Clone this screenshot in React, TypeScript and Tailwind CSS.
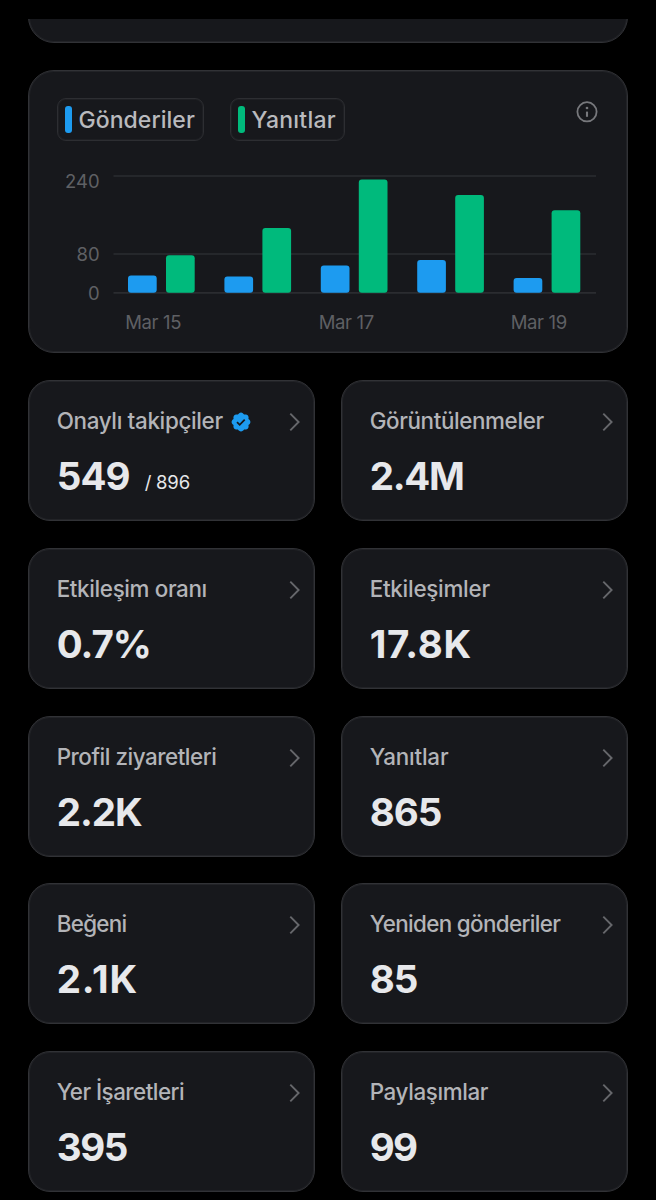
import React from 'react';

type Metric = {
  label: string;
  labelClass: string;
  value: string;
  valueClass: string;
  total?: string;
  verified?: boolean;
};

const metrics: Metric[] = [
  { label: 'Onaylı takipçiler', labelClass: 'tracking-[-0.33px]', value: '549', valueClass: 'tracking-[-0.9px]', total: '/ 896', verified: true },
  { label: 'Görüntülenmeler', labelClass: 'tracking-[-0.38px]', value: '2.4M', valueClass: 'tracking-[-1.3px]' },
  { label: 'Etkileşim oranı', labelClass: 'tracking-[-0.36px]', value: '0.7%', valueClass: 'tracking-[-1px]' },
  { label: 'Etkileşimler', labelClass: 'tracking-[-0.25px]', value: '17.8K', valueClass: 'tracking-[0.7px]' },
  { label: 'Profil ziyaretleri', labelClass: 'tracking-[-0.46px]', value: '2.2K', valueClass: 'tracking-[-1px]' },
  { label: 'Yanıtlar', labelClass: 'tracking-[-0.2px]', value: '865', valueClass: 'tracking-[-1px]' },
  { label: 'Beğeni', labelClass: 'tracking-[-0.7px]', value: '2.1K', valueClass: 'tracking-[0.9px]' },
  { label: 'Yeniden gönderiler', labelClass: 'tracking-[-0.65px]', value: '85', valueClass: 'tracking-[-1px]' },
  { label: 'Yer İşaretleri', labelClass: 'tracking-[-0.52px]', value: '395', valueClass: 'tracking-[-1.4px]' },
  { label: 'Paylaşımlar', labelClass: 'tracking-[-0.38px]', value: '99', valueClass: 'tracking-[-1.7px]' },
];

const days = [
  { posts: 17.4, replies: 37.5 },
  { posts: 16.4, replies: 64.7 },
  { posts: 27.2, replies: 113.4 },
  { posts: 32.7, replies: 97.7 },
  { posts: 14.9, replies: 82.5 },
];

function Chevron() {
  return (
    <svg className="h-[20px] w-[12px] shrink-0" viewBox="0 0 12 20" fill="none" stroke="#66676b" strokeWidth="1.9">
      <path d="M1.3 1.7 9.6 10 1.3 18.3" />
    </svg>
  );
}

function VerifiedBadge() {
  return (
    <svg className="ml-[7px] size-[22px] shrink-0" viewBox="0 0 22 22">
      <path
        fill="#1d9bf0"
        d="M20.396 11c-.018-.646-.215-1.275-.57-1.816-.354-.54-.852-.972-1.438-1.246.223-.607.27-1.264.14-1.897-.131-.634-.437-1.218-.882-1.687-.47-.445-1.053-.75-1.687-.882-.633-.13-1.29-.083-1.897.14-.273-.587-.704-1.086-1.245-1.44S11.647 1.62 11 1.604c-.646.017-1.273.213-1.813.568s-.969.854-1.24 1.44c-.608-.223-1.267-.272-1.902-.14-.635.13-1.22.436-1.69.882-.445.47-.749 1.055-.878 1.688-.13.633-.08 1.29.144 1.896-.587.274-1.087.705-1.443 1.245-.356.54-.555 1.17-.574 1.817.02.647.218 1.276.574 1.817.356.54.856.972 1.443 1.245-.224.606-.274 1.263-.144 1.896.13.634.433 1.218.877 1.688.47.443 1.054.747 1.687.878.633.132 1.29.084 1.897-.136.274.586.705 1.084 1.246 1.439.54.354 1.17.551 1.816.569.647-.016 1.276-.213 1.817-.567s.972-.854 1.245-1.44c.604.239 1.266.296 1.903.164.636-.132 1.22-.447 1.68-.907.46-.46.776-1.044.908-1.681s.075-1.299-.165-1.903c.586-.274 1.084-.705 1.439-1.246.354-.54.551-1.17.569-1.816z"
      />
      <path d="m7 11.2 2.7 2.6 5-5.1" fill="none" stroke="#17181c" strokeWidth="1.8" />
    </svg>
  );
}

function MetricCard({ metric }: { metric: Metric }) {
  return (
    <div className="flex h-[141px] flex-col rounded-[22px] border border-[#313236] bg-[#17181c] pr-[13.5px] pl-[27.7px] shadow-[inset_0_0_0_1px_#222327]">
      <div className="mt-[27px] flex h-[28px] items-center">
        <span className={`-mt-[2px] text-[22.4px] leading-[28px] font-[450] whitespace-nowrap text-[#b3b4b8] ${metric.labelClass}`}>
          {metric.label}
        </span>
        {metric.verified && <VerifiedBadge />}
        <span className="ml-auto flex">
          <Chevron />
        </span>
      </div>
      <div className="mt-[16px] flex items-end text-[#e7e8eb]">
        <span className={`text-[38.5px] leading-[48px] font-bold ${metric.valueClass}`}>{metric.value}</span>
        {metric.total && <span className="mb-[4px] ml-[15px] text-[18.5px] leading-[28px] tracking-[-0.2px]">{metric.total}</span>}
      </div>
    </div>
  );
}

function Legend({ label, swatch, spacing }: { label: string; swatch: string; spacing: string }) {
  return (
    <div className={`flex h-[43px] items-center rounded-[9px] border border-[#2d2e32] pl-[7px] shadow-[inset_0_0_0_1px_#1e1f23] ${spacing}`}>
      <span className={`h-[27px] w-[7px] rounded-[3px] ${swatch}`} />
      <span className="ml-[6.5px] text-[23px] leading-[28px] font-[450] whitespace-nowrap text-[#b9babe]">{label}</span>
    </div>
  );
}

function Chart() {
  return (
    <svg className="h-[180px] w-[540px]" viewBox="57 160 540 180" fill="#5f6064" fontSize="18.5">
      {[176, 254, 292.8].map((y) => (
        <path key={y} d={`M113.5 ${y}H596`} stroke="#2b2c30" strokeWidth="1.7" />
      ))}
      <g textAnchor="end">
        <text x="99.7" y="187.8">240</text>
        <text x="99.7" y="260.8">80</text>
        <text x="99.7" y="299.8">0</text>
      </g>
      {days.map((day, i) => (
        <g key={i}>
          <rect x={128 + i * 96.4} y={292.8 - day.posts} width="28.7" height={day.posts} rx="3" fill="#1d9bf0" />
          <rect x={166 + i * 96.4} y={292.8 - day.replies} width="28.7" height={day.replies} rx="3" fill="#00ba7c" />
        </g>
      ))}
      <g letterSpacing="-0.35">
        <text x="125.2" y="329.4">Mar 15</text>
        <text x="318.7" y="329.4">Mar 17</text>
        <text x="510.7" y="329.4">Mar 19</text>
      </g>
    </svg>
  );
}

export default function App() {
  return (
    <main className="h-[1200px] w-[656px] overflow-hidden bg-black pt-[19px] font-['Inter','Noto_Sans',sans-serif]">
      <div className="mx-[28px] flex h-[24px] items-end overflow-hidden">
        <div className="h-[80px] w-full shrink-0 rounded-[26px] border border-[#313236] bg-[#17181c] shadow-[inset_0_0_0_1px_#222327]" />
      </div>
      <section className="mx-[28px] mt-[27px] h-[283px] rounded-[26px] border border-[#313236] bg-[#17181c] pt-[27px] pl-[28px] shadow-[inset_0_0_0_1px_#222327]">
        <div className="flex h-[62px] items-start">
          <Legend label="Gönderiler" swatch="bg-[#1d9bf0]" spacing="w-[147px] tracking-[0.05px]" />
          <Legend label="Yanıtlar" swatch="bg-[#00ba7c]" spacing="ml-[26px] w-[115px] tracking-[0.25px]" />
          <svg className="mt-[2px] mr-[28.5px] ml-auto size-[24px]" viewBox="0 0 24 24" fill="none" stroke="#77787c" strokeWidth="1.8">
            <circle cx="12" cy="11.8" r="9.6" />
            <path d="M12 11.6v5.2" strokeWidth="2.1" />
            <circle cx="12" cy="8" r="1.35" fill="#77787c" stroke="none" />
          </svg>
        </div>
        <Chart />
      </section>
      <section className="mx-[28px] mt-[27px] grid grid-cols-2 gap-x-[26px] gap-y-[26.8px]">
        {metrics.map((metric) => (
          <MetricCard key={metric.label} metric={metric} />
        ))}
      </section>
    </main>
  );
}
